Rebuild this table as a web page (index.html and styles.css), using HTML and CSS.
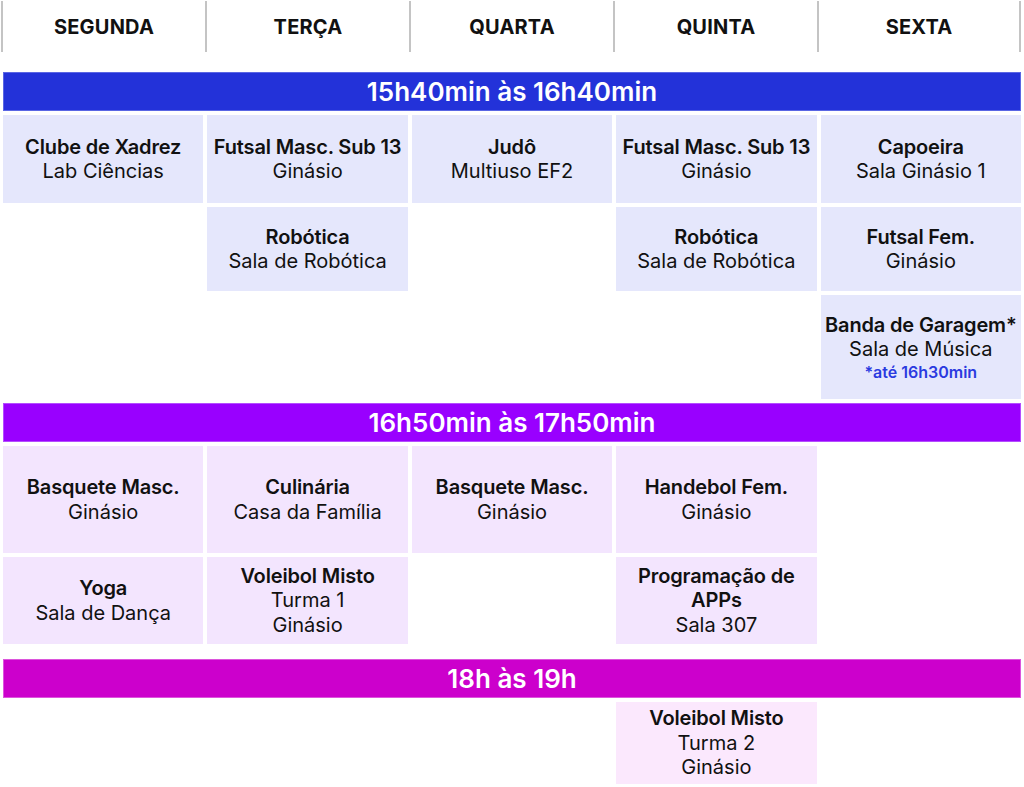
FILE: index.html
```html
<!DOCTYPE html>
<html lang="pt">
<head>
<meta charset="utf-8">
<title>Horário de Atividades</title>
<link rel="stylesheet" href="styles.css">
</head>
<body>
<div class="days">
  <div class="day">SEGUNDA</div>
  <div class="day">TERÇA</div>
  <div class="day">QUARTA</div>
  <div class="day">QUINTA</div>
  <div class="day last">SEXTA</div>
</div>

<section class="slot slot-1">
  <div class="band">15h40min às 16h40min</div>
  <div class="cell"><b>Clube de Xadrez</b><span>Lab Ciências</span></div>
  <div class="cell"><b>Futsal Masc. Sub 13</b><span>Ginásio</span></div>
  <div class="cell"><b>Judô</b><span>Multiuso EF2</span></div>
  <div class="cell"><b>Futsal Masc. Sub 13</b><span>Ginásio</span></div>
  <div class="cell"><b>Capoeira</b><span>Sala Ginásio 1</span></div>

  <div class="empty"></div>
  <div class="cell"><b>Robótica</b><span>Sala de Robótica</span></div>
  <div class="empty"></div>
  <div class="cell"><b>Robótica</b><span>Sala de Robótica</span></div>
  <div class="cell"><b>Futsal Fem.</b><span>Ginásio</span></div>

  <div class="empty"></div>
  <div class="empty"></div>
  <div class="empty"></div>
  <div class="empty"></div>
  <div class="cell"><b>Banda de Garagem*</b><span>Sala de Música</span><em>*até 16h30min</em></div>
</section>

<section class="slot slot-2">
  <div class="band">16h50min às 17h50min</div>
  <div class="cell"><b>Basquete Masc.</b><span>Ginásio</span></div>
  <div class="cell"><b>Culinária</b><span>Casa da Família</span></div>
  <div class="cell"><b>Basquete Masc.</b><span>Ginásio</span></div>
  <div class="cell"><b>Handebol Fem.</b><span>Ginásio</span></div>
  <div class="empty"></div>

  <div class="cell"><b>Yoga</b><span>Sala de Dança</span></div>
  <div class="cell"><b>Voleibol Misto</b><span>Turma 1</span><span>Ginásio</span></div>
  <div class="empty"></div>
  <div class="cell"><b>Programação de APPs</b><span>Sala 307</span></div>
  <div class="empty"></div>
</section>

<section class="slot slot-3">
  <div class="band">18h às 19h</div>
  <div class="empty"></div>
  <div class="empty"></div>
  <div class="empty"></div>
  <div class="cell"><b>Voleibol Misto</b><span>Turma 2</span><span>Ginásio</span></div>
  <div class="empty"></div>
</section>
</body>
</html>
```

FILE: styles.css
```css
* { box-sizing: border-box; }

html, body {
  margin: 0;
  padding: 0;
  background: #ffffff;
}

body {
  font-family: "Inter", "Noto Sans", "Liberation Sans", sans-serif;
  color: #111111;
  width: 1024px;
}

.days {
  display: flex;
  margin: 1px 0 0 1px;
  height: 51px;
}

.day {
  width: 204px;
  border-left: 2px solid #c4c4c4;
  display: flex;
  align-items: center;
  justify-content: center;
  font-weight: 700;
  font-size: 20px;
  letter-spacing: 0.2px;
}

.day.last {
  border-right: 2px solid #c4c4c4;
}

.slot {
  display: grid;
  grid-template-columns: repeat(5, 1fr);
  gap: 4px;
  margin-left: 3px;
  width: 1018px;
}

.slot-1 {
  margin-top: 20px;
  grid-template-rows: 39px 88px 84px 104px;
}

.slot-2 {
  margin-top: 4px;
  grid-template-rows: 39px 107px 87px;
}

.slot-3 {
  margin-top: 15px;
  grid-template-rows: 39px 82px;
}

.band {
  grid-column: 1 / -1;
  display: flex;
  align-items: center;
  justify-content: center;
  color: #ffffff;
  font-size: 26px;
  font-weight: 600;
}

.slot-1 .band { background: #2332d9; border: 1px solid #5a66e4; }
.slot-2 .band { background: #9900ff; border: 1px solid #b44dff; }
.slot-3 .band { background: #cc00cc; border: 1px solid #dc55dc; }

.cell {
  display: flex;
  flex-direction: column;
  align-items: center;
  justify-content: center;
  text-align: center;
  padding: 0 3px;
  font-size: 20px;
  line-height: 24.5px;
}

.slot-1 .cell { background: #e5e7fc; }
.slot-2 .cell { background: #f3e5fe; }
.slot-3 .cell { background: #fbe8fd; }

.cell b {
  font-weight: 600;
  letter-spacing: -0.15px;
}

.cell span {
  font-weight: 400;
}

.cell em {
  font-style: normal;
  font-weight: 600;
  font-size: 16px;
  line-height: 20px;
  color: #2a3ae0;
}
```
